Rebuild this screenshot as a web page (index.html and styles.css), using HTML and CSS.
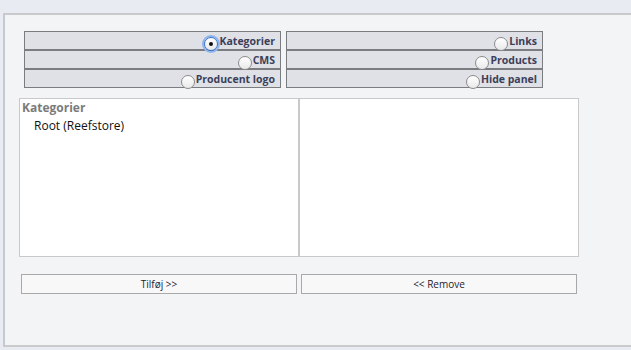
FILE: index.html
```html
<!DOCTYPE html>
<html lang="da">
  <head>
    <meta charset="UTF-8" />
    <title>Menu</title>
    <link rel="stylesheet" href="styles.css">
  </head>
  <body>
    <div class="panel">
      <!-- valg af type -->
      <div class="type-grid">
        <div class="type-col">
          <label class="type-row"><span class="radio on"></span>Kategorier</label>
          <label class="type-row"><span class="radio"></span>CMS</label>
          <label class="type-row"><span class="radio"></span>Producent logo</label>
        </div>
        <div class="type-col">
          <label class="type-row"><span class="radio"></span>Links</label>
          <label class="type-row"><span class="radio"></span>Products</label>
          <label class="type-row"><span class="radio"></span>Hide panel</label>
        </div>
      </div>

      <!-- lister -->
      <div class="lists">
        <div class="list-box">
          <h4 class="list-title">Kategorier</h4>
          <ul class="tree">
            <li>Root (Reefstore)</li>
          </ul>
        </div>
        <div class="list-box"></div>
      </div>

      <div class="actions">
        <button type="button" class="btn">Tilføj &gt;&gt;</button>
        <button type="button" class="btn">&lt;&lt; Remove</button>
      </div>
    </div>
  </body>
</html>
```

FILE: styles.css
```css
html,
body {
  margin: 0;
  padding: 0;
}

body {
  background: #e9ebf2;
  font-family: "Open Sans", "DejaVu Sans", sans-serif;
  height: 350px;
  overflow: hidden;
}

ul,
li {
  list-style: none;
  margin: 0;
  padding: 0;
}

.panel {
  margin: 13px 0 0 3px;
  border-top: 2px solid #c8c9cd;
  border-left: 2px solid #c8c9cd;
  border-bottom: 2px solid #c9cacc;
  background: #f3f4f6;
  padding: 16px 0 51px 14px;
}

/* radio rækker */
.type-grid {
  display: flex;
  gap: 5px;
  margin-left: 5px;
}

.type-col {
  display: flex;
  flex-direction: column;
  width: 257px;
}

.type-row {
  display: flex;
  justify-content: flex-end;
  align-items: center;
  height: 17px;
  border: 1px solid #7b7c80;
  background: #e0e1e6;
  padding-right: 5px;
  font-size: 10.5px;
  font-weight: bold;
  color: #3b3f5a;
}

.radio {
  width: 12px;
  height: 12px;
  border-radius: 50%;
  border: 1px solid #8c8c8c;
  background: linear-gradient(#ffffff, #e9e9e9);
  margin: 6px 1px 0 0;
  position: relative;
}

.radio.on {
  border-color: #3b74c8;
  box-shadow: 0 0 0 2px #8db4ee;
  margin-right: 2px;
}

.radio.on::after {
  content: "";
  position: absolute;
  top: 4px;
  left: 4px;
  width: 4px;
  height: 4px;
  border-radius: 50%;
  background: #111;
}

/* lister */
.lists {
  display: flex;
  margin-top: 10px;
}

.list-box {
  width: 278px;
  height: 157px;
  border: 1px solid #c9c9c9;
  background: #fff;
}

.list-title {
  margin: 0;
  padding: 1px 0 0 2px;
  font-size: 12px;
  line-height: 16px;
  color: #7b7b7b;
}

.tree li {
  padding: 2px 0 0 14px;
  font-size: 12px;
  line-height: 16px;
  color: #111;
}

.actions {
  display: flex;
  gap: 4px;
  margin: 17px 0 0 2px;
}

.btn {
  width: 276px;
  height: 20px;
  border: 1px solid #a9a9a9;
  background: #f8f8f8;
  font-family: inherit;
  font-size: 10px;
  color: #1e2230;
  padding: 0;
  cursor: pointer;
}
```
